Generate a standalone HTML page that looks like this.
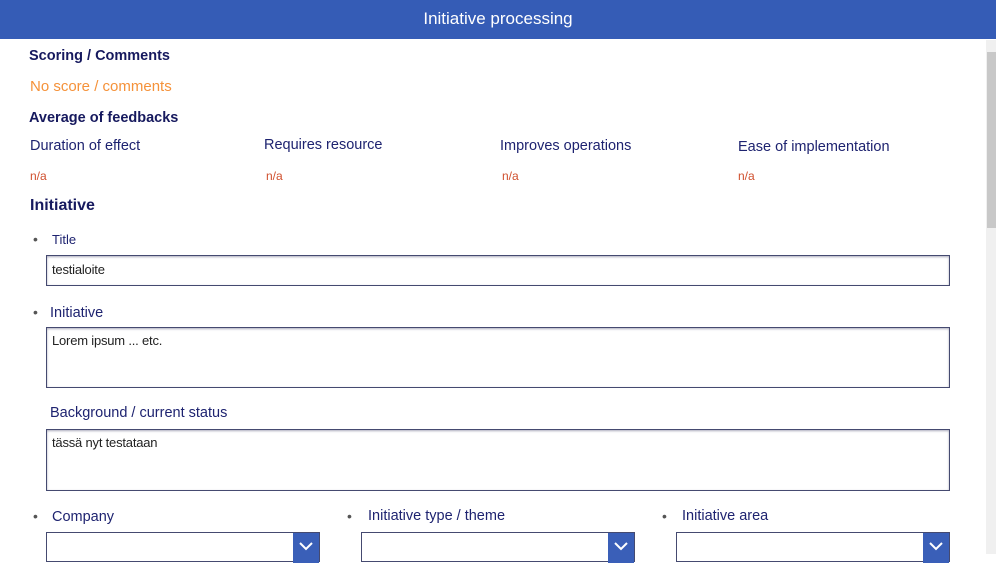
<!DOCTYPE html>
<html><head><meta charset="utf-8"><style>
html,body{margin:0;padding:0;width:996px;height:554px;overflow:hidden;background:#fff;font-family:"Liberation Sans",sans-serif;}
.a{position:absolute;white-space:nowrap}
.hdr{position:absolute;left:0;top:0;width:996px;height:39px;background:#355cb6;color:#fff;font-size:17px;text-align:center;line-height:37px;}
.h{color:#16195e;font-weight:bold;font-size:14.5px}
.l{color:#1e2370;font-size:14.5px}
.na{color:#d0502e;font-size:12px}
.box{position:absolute;border:1.5px solid #454a70;box-shadow:inset 0 1px 2px #aab;background:#fff;box-sizing:border-box}
.t{font-size:13px;color:#222;position:absolute;left:5px;letter-spacing:-0.2px}
.star{color:#555;font-size:14px}
.dd{position:absolute;top:532px;height:30px;border:1.5px solid #454a70;box-sizing:border-box;background:#fff}
.dd .b{position:absolute;right:0;top:0;width:26px;height:30px;background:#3a5fb8}
</style></head><body>
<div class="hdr">Initiative processing</div>
<div class="a" style="left:986px;top:40px;width:10px;height:514px;background:#f0f0f0"></div>
<div class="a" style="left:987px;top:52px;width:9px;height:176px;background:#c8c8c8"></div>
<div class="a h" style="left:29px;top:48px">Scoring / Comments</div>
<div class="a" style="left:30px;top:78px;color:#f5923a;font-size:15px">No score / comments</div>
<div class="a h" style="left:29px;top:110px">Average of feedbacks</div>
<div class="a l" style="left:30px;top:138px">Duration of effect</div>
<div class="a l" style="left:264px;top:137px">Requires resource</div>
<div class="a l" style="left:500px;top:138px">Improves operations</div>
<div class="a l" style="left:738px;top:139px">Ease of implementation</div>
<div class="a na" style="left:30px;top:169px">n/a</div>
<div class="a na" style="left:266px;top:169px">n/a</div>
<div class="a na" style="left:502px;top:169px">n/a</div>
<div class="a na" style="left:738px;top:169px">n/a</div>
<div class="a h" style="left:30px;top:197px;font-size:16px">Initiative</div>
<div class="a star" style="left:33px;top:231px">•</div>
<div class="a l" style="left:52px;top:232px;font-size:13px">Title</div>
<div class="box" style="left:46px;top:255px;width:904px;height:31px"><span class="t" style="top:6px">testialoite</span></div>
<div class="a star" style="left:33px;top:304px">•</div>
<div class="a l" style="left:50px;top:305px">Initiative</div>
<div class="box" style="left:46px;top:327px;width:904px;height:61px"><span class="t" style="top:5px">Lorem ipsum ... etc.</span></div>
<div class="a l" style="left:50px;top:405px">Background / current status</div>
<div class="box" style="left:46px;top:429px;width:904px;height:62px"><span class="t" style="top:5px">tässä nyt testataan</span></div>
<div class="a star" style="left:33px;top:508px">•</div>
<div class="a l" style="left:52px;top:509px">Company</div>
<div class="a star" style="left:347px;top:508px">•</div>
<div class="a l" style="left:368px;top:508px">Initiative type / theme</div>
<div class="a star" style="left:662px;top:508px">•</div>
<div class="a l" style="left:682px;top:508px">Initiative area</div>
<div class="dd" style="left:46px;width:274px"><div class="b"><svg width="26" height="24"><path d="M7 10 L13 16 L19 10" stroke="#fff" stroke-width="2" fill="none"/></svg></div></div>
<div class="dd" style="left:361px;width:274px"><div class="b"><svg width="26" height="24"><path d="M7 10 L13 16 L19 10" stroke="#fff" stroke-width="2" fill="none"/></svg></div></div>
<div class="dd" style="left:676px;width:274px"><div class="b"><svg width="26" height="24"><path d="M7 10 L13 16 L19 10" stroke="#fff" stroke-width="2" fill="none"/></svg></div></div>
</body></html>
